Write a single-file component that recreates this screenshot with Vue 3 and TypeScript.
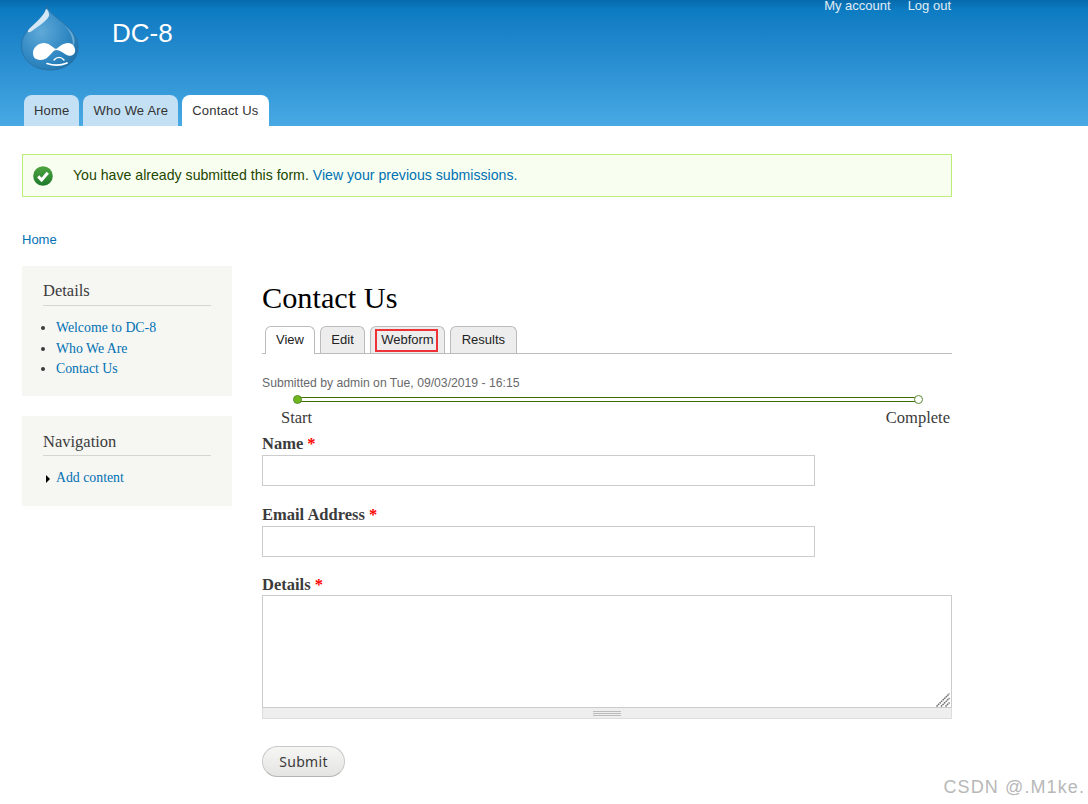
<script setup lang="ts">
const primary = [
  { label: 'Home', active: false },
  { label: 'Who We Are', active: false },
  { label: 'Contact Us', active: true },
]
const tabs = ['View', 'Edit', 'Webform', 'Results']
const details = ['Welcome to DC-8', 'Who We Are', 'Contact Us']
</script>

<template>
  <div class="page">
    <header class="header">
      <div class="header-top">
        <svg class="logo" viewBox="0 0 58 65" width="58" height="65" aria-hidden="true">
          <defs>
            <radialGradient id="drop" cx="0.35" cy="0.4" r="0.8">
              <stop offset="0" stop-color="#5fa9d8" />
              <stop offset="0.6" stop-color="#2f87c2" />
              <stop offset="1" stop-color="#1c6ea3" />
            </radialGradient>
          </defs>
          <path d="M26 0C28 8 39 13 47 21C54 28 57 35 57 41C57 55 45 64 29 64C13 64 0.5 54 0.5 40C0.5 28 10 20 18 15C22 12 26 7 26 0Z" fill="url(#drop)" stroke="#2a6f9f" stroke-width="0.8" />
          <path d="M25 3C23 10 15 16 8 23C5 27 8 27 11 25C17 20 25 16 28 10C29 8 26 2 25 3Z" fill="#d3e7f4" />
          <path d="M44 20C51 27 53 36 51 43C56 36 54 27 44 20Z" fill="#7fbbe0" opacity="0.7" />
          <path d="M12 47C12 41 18 37 23 37C28 37 31 41 35 43C38 41 42 37 47 37C52 37 55 42 54 46C53 50 48 51 44 48C41 46 38 44 35 44C31 44 28 54 20 54C15 54 12 52 12 47Z" fill="#fff" />
          <path d="M26 57.5C32 59.5 40 59.5 46 57" fill="none" stroke="#fff" stroke-width="1.7" stroke-linecap="round" />
          <path d="M33 54C36 50.5 40 50.5 43 54" fill="none" stroke="#fff" stroke-width="1.4" stroke-linecap="round" />
        </svg>
        <div class="site-name">DC-8</div>
        <nav class="secondary">
          <a>My account</a>
          <a>Log out</a>
        </nav>
      </div>
      <nav class="primary">
        <a v-for="item in primary" :key="item.label" :class="{ active: item.active }">{{ item.label }}</a>
      </nav>
    </header>

    <div class="wrap">
      <div class="message">
        <svg class="check" viewBox="0 0 20 20" width="20" height="20" aria-hidden="true">
          <defs>
            <linearGradient id="ok" x1="0" y1="0" x2="0" y2="1">
              <stop offset="0" stop-color="#4fa43f" />
              <stop offset="1" stop-color="#1e7a2c" />
            </linearGradient>
          </defs>
          <circle cx="10" cy="10" r="9.8" fill="url(#ok)" />
          <path d="M5.2 10.4L8.6 14L14.8 6.8" fill="none" stroke="#fff" stroke-width="3" />
        </svg>
        <span class="message-text">You have already submitted this form. <a>View your previous submissions.</a></span>
      </div>

      <div class="breadcrumb"><a>Home</a></div>

      <div class="columns">
        <aside class="sidebar">
          <section class="block block-details">
            <h2>Details</h2>
            <ul>
              <li v-for="d in details" :key="d"><a>{{ d }}</a></li>
            </ul>
          </section>
          <section class="block block-nav">
            <h2>Navigation</h2>
            <div class="nav-item"><span class="arrow"></span><a>Add content</a></div>
          </section>
        </aside>

        <main class="main">
          <h1>Contact Us</h1>
          <div class="tabs">
            <a v-for="(t, i) in tabs" :key="t" :class="{ active: i === 0 }">
              <span :class="{ marked: t === 'Webform' }">{{ t }}</span>
            </a>
          </div>
          <div class="submitted">Submitted by admin on Tue, 09/03/2019 - 16:15</div>

          <div class="progress">
            <div class="track">
              <span class="dot done"></span>
              <span class="bar"></span>
              <span class="dot"></span>
            </div>
            <div class="progress-labels">
              <span>Start</span>
              <span>Complete</span>
            </div>
          </div>

          <form class="form" @submit.prevent>
            <div class="field f-name">
              <label>Name <em>*</em></label>
              <input type="text" />
            </div>
            <div class="field f-email">
              <label>Email Address <em>*</em></label>
              <input type="text" />
            </div>
            <div class="field f-details">
              <label>Details <em>*</em></label>
              <div class="area">
                <textarea></textarea>
                <svg class="handle" viewBox="0 0 14 14" width="14" height="14" aria-hidden="true">
                  <path d="M0.5 13.5L13.5 0.5M5 13.5L13.5 5M9.5 13.5L13.5 9.5" fill="none" stroke="#707070" stroke-width="1.5" stroke-dasharray="1.6 0.6" />
                </svg>
                <div class="grippie"><span></span></div>
              </div>
            </div>
            <button type="button" class="submit">Submit</button>
          </form>
        </main>
      </div>
    </div>

    <div class="watermark">CSDN @.M1ke.</div>
  </div>
</template>

<style>
html, body { margin: 0; background: #fff; overflow: hidden; }
</style>

<style scoped>
.page {
  position: relative;
  width: 1088px;
  height: 804px;
  overflow: hidden;
  font-family: "Liberation Sans", Arial, sans-serif;
  color: #3b3b3b;
}
a { color: #0071b3; }
.header {
  height: 126px;
  box-sizing: border-box;
  background: linear-gradient(to bottom, #0779bf 0, #1a82c8 25%, #48a9e4 100%);
  position: relative;
}
.header::before {
  content: "";
  position: absolute;
  inset: 0 0 auto 0;
  height: 10px;
  background: linear-gradient(to bottom, rgba(0, 50, 100, 0.2), rgba(0, 50, 100, 0));
}
.header-top {
  position: relative;
  display: flex;
  align-items: flex-start;
  width: 952px;
  height: 95px;
  box-sizing: border-box;
  padding: 6px 1px 0 21px;
}
.logo { flex: none; }
.site-name {
  margin: 12px 0 0 33px;
  font-size: 26px;
  line-height: 30px;
  color: #fff;
}
.secondary {
  margin-left: auto;
  margin-top: -6px;
  display: flex;
  gap: 17px;
  font-size: 13px;
  line-height: 12px;
}
.secondary a { color: #e0edf6; }
.primary {
  display: flex;
  gap: 4px;
  padding-left: 24px;
  height: 31px;
}
.primary a {
  padding: 0 10px;
  line-height: 31px;
  font-size: 13px;
  letter-spacing: 0.2px;
  color: #333;
  background: #c4e0f4;
  border-radius: 8px 8px 0 0;
}
.primary a.active { background: #fff; }
.wrap { padding: 28px 136px 0 22px; }
.message {
  display: flex;
  align-items: center;
  height: 43px;
  box-sizing: border-box;
  padding-left: 10px;
  border: 1px solid #bbee77;
  background: #f8fff0;
  font-size: 14.13px;
  color: #234600;
}
.message-text { margin-top: -2px; }
.check { flex: none; margin-right: 20px; }
.breadcrumb {
  margin-top: 35px;
  font-size: 13px;
  line-height: 15px;
}
.columns { display: flex; margin-top: 19px; gap: 30px; }
.sidebar { width: 210px; flex: none; display: flex; flex-direction: column; gap: 20px; }
.block {
  background: #f6f6f2;
  padding: 16px 21px 0;
  box-sizing: border-box;
  font-family: "Liberation Serif", Georgia, serif;
}
.block-details { height: 130px; }
.block-nav { height: 90px; padding-top: 17px; }
.block h2 {
  margin: 0;
  font-weight: 400;
  font-size: 16.5px;
  line-height: 18px;
  padding-bottom: 5px;
  border-bottom: 1px solid #d6d6d0;
  color: #3b3b3b;
}
.block-nav h2 { padding-bottom: 4px; }
.block ul {
  margin: 12px 0 0;
  padding: 0 0 0 13px;
  font-size: 13.8px;
  line-height: 20.6px;
}
.nav-item {
  display: flex;
  align-items: center;
  margin-top: 12px;
  font-size: 13.8px;
  line-height: 20px;
}
.arrow {
  width: 0;
  height: 0;
  margin: 2px 6px 0 3px;
  border-left: 4px solid #000;
  border-top: 4px solid transparent;
  border-bottom: 4px solid transparent;
}
.main { width: 690px; flex: none; }
h1 {
  margin: 16px 0 0;
  font-family: "Liberation Serif", Georgia, serif;
  font-weight: 400;
  font-size: 30.3px;
  line-height: 33px;
  color: #000;
}
.tabs {
  display: flex;
  gap: 5px;
  margin-top: 11px;
  padding-left: 3px;
  height: 28px;
  box-sizing: border-box;
  border-bottom: 1px solid #bbb;
  font-size: 13px;
}
.tabs a {
  display: block;
  height: 27px;
  box-sizing: border-box;
  padding: 0 10px;
  line-height: 26px;
  color: #222;
  background: #ededed;
  border: 1px solid #bbb;
  border-bottom: none;
  border-radius: 6px 6px 0 0;
}
.tabs a.active { background: #fff; height: 28px; }
.tabs a:nth-child(2) { padding: 0 10.4px; }
.tabs a:nth-child(3) { padding: 0 6px 0 4px; }
.tabs a:nth-child(4) { padding: 0 11px; }
.tabs span { display: block; }
.tabs span.marked {
  height: 23px;
  margin-top: 2px;
  padding: 0 2px 0 4px;
  line-height: 18px;
  box-sizing: border-box;
  border: 2px solid #ee3338;
}
.submitted {
  margin-top: 22px;
  font-size: 12.2px;
  line-height: 14px;
  color: #68696b;
}
.progress {
  font-family: "Liberation Serif", Georgia, serif;
  font-size: 16.5px;
  color: #3b3b3b;
}
.track {
  display: flex;
  align-items: center;
  margin: 4px 29px 0 31px;
  height: 11px;
}
.dot {
  width: 9px;
  height: 9px;
  flex: none;
  box-sizing: border-box;
  border-radius: 50%;
  border: 1px solid #5a8a32;
  background: #fff;
  position: relative;
}
.dot.done { background: #6cb71b; }
.bar {
  flex: 1;
  height: 5px;
  box-sizing: border-box;
  border-top: 1px solid #3f6d00;
  border-bottom: 1px solid #3f6d00;
  margin: 0 -1px;
}
.progress-labels {
  display: flex;
  justify-content: space-between;
  padding: 0 2px 0 19px;
  line-height: 17px;
  margin-top: 4px;
}
.form { margin-top: 8px; }
label {
  display: block;
  font-family: "Liberation Serif", Georgia, serif;
  font-weight: 700;
  font-size: 16.5px;
  line-height: 19px;
  margin-bottom: 2px;
  color: #3b3b3b;
}
label em { font-style: normal; color: #f00; }
.f-name { margin-bottom: 19px; }
.f-email { margin-bottom: 18px; }
.f-details { margin-bottom: 27px; }
.f-details label { margin-bottom: 1px; }
input {
  display: block;
  width: 553px;
  height: 31px;
  box-sizing: border-box;
  border: 1px solid #ccc;
  background: #fff;
  margin: 0;
  padding: 0;
}
.area { width: 690px; position: relative; }
textarea {
  display: block;
  width: 690px;
  height: 113px;
  box-sizing: border-box;
  border: 1px solid #ccc;
  margin: 0;
  padding: 0;
  resize: none;
}
.handle {
  position: absolute;
  right: 2px;
  top: 98px;
}
.grippie {
  height: 11px;
  box-sizing: border-box;
  background: #eee;
  border: 1px solid #ddd;
  border-top: none;
  display: flex;
  justify-content: center;
  align-items: center;
}
.grippie span {
  width: 28px;
  height: 5px;
  box-sizing: border-box;
  border-top: 1px solid #bbb;
  border-bottom: 1px solid #bbb;
  background: linear-gradient(#bbb, #bbb) center / 100% 1px no-repeat;
}
.submit {
  display: block;
  width: 83px;
  height: 31px;
  padding: 0;
  border: 1px solid #c8c8c8;
  border-bottom-color: #b4b4b4;
  border-radius: 16px;
  background: linear-gradient(#f6f6f5, #e4e4e2);
  font-family: "Noto Sans", "Open Sans", sans-serif;
  font-size: 14px;
  letter-spacing: 0.3px;
  color: #3a3a3a;
}
.watermark {
  position: absolute;
  right: 3px;
  bottom: 7px;
  font-size: 18px;
  line-height: 20px;
  letter-spacing: 1.1px;
  color: #b8b8b8;
}
</style>
